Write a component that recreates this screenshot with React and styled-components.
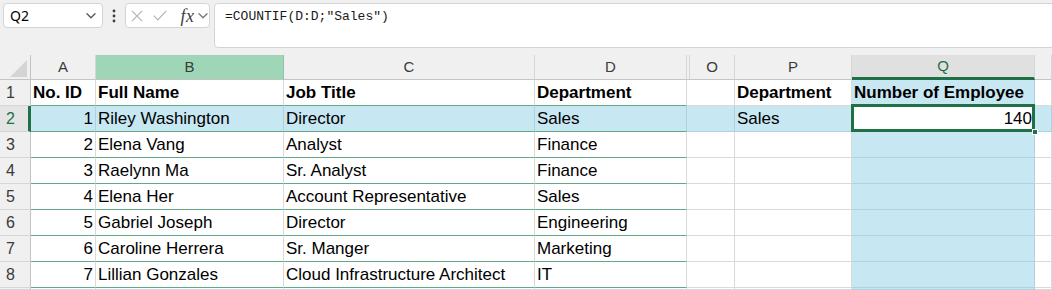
import React from 'react';
import styled, { createGlobalStyle, css } from 'styled-components';

const C = {
  bg: '#f0f0f0',
  grid: '#dadada',
  headLine: '#c4c4c4',
  headSep: '#d6d6d6',
  table: '#63a886',
  blue: '#c7e7f3',
  blueLine: '#aed2e0',
  green: '#1f7045',
  hover: '#a0d6b8',
  activeHead: '#e0e0e0',
};

const GlobalStyle = createGlobalStyle`
  html, body { margin: 0; padding: 0; background: ${C.bg}; overflow: hidden; }
  * { box-sizing: border-box; }
`;

const Frame = styled.div`
  width: 1052px;
  height: 290px;
  overflow: hidden;
  display: flex;
  flex-direction: column;
  background: ${C.bg};
  font-family: "Liberation Sans", Arial, sans-serif;
`;

const Toolbar = styled.div`
  height: 55px;
  flex: none;
  display: flex;
  align-items: flex-start;
  padding: 3px 0 0 3px;
`;

const NameBox = styled.div`
  width: 100px;
  height: 25px;
  flex: none;
  background: #fff;
  border: 1px solid #d4d4d4;
  border-radius: 4px;
  display: flex;
  align-items: center;
  justify-content: space-between;
  padding: 0 6px 0 6px;
  font-family: "Noto Sans", "Liberation Sans", sans-serif;
  font-size: 14px;
  color: #000;
`;

const Grip = styled.div`
  width: 22px;
  height: 25px;
  flex: none;
  display: flex;
  align-items: center;
  justify-content: center;
`;

const FnBox = styled.div`
  width: 85px;
  height: 25px;
  flex: none;
  background: #fff;
  border: 1px solid #d4d4d4;
  border-radius: 4px;
  display: flex;
  align-items: center;
  padding-left: 5px;
`;

const Slot = styled.span`
  display: flex;
  align-items: center;
  justify-content: center;
  width: ${p => p.$w}px;
  margin-right: ${p => p.$gap || 0}px;
  flex: none;
`;

const Fx = styled.span`
  font-family: "Liberation Serif", "DejaVu Serif", serif;
  font-style: italic;
  font-size: 18px;
  line-height: 20px;
  color: #3f3f3f;
  letter-spacing: 0.5px;
`;

const FormulaBox = styled.div`
  flex: 1;
  height: 45px;
  margin-left: 4px;
  margin-right: -8px;
  background: #fff;
  border: 1px solid #d4d4d4;
  border-radius: 4px;
  padding: 4px 10px 0 10px;
  font-family: "Liberation Mono", "DejaVu Sans Mono", monospace;
  font-size: 13px;
  line-height: 18px;
  color: #1a1a1a;
  white-space: pre;
`;

const Sheet = styled.div`
  flex: 1;
  display: grid;
  grid-template-columns: 31px 65px 188px 251px 152px 3px 45px 117px 183px 1fr;
  grid-template-rows: 25px repeat(8, 26px) 1fr;
  background: #fff;
  overflow: hidden;
`;

const Corner = styled.div`
  background: ${C.bg};
  border-right: 1px solid ${C.headLine};
  border-bottom: 1px solid ${C.headLine};
  display: flex;
  align-items: flex-end;
  justify-content: flex-end;
  padding: 0 3px 2px 0;
`;

const ColHead = styled.div`
  background: ${p => (p.$state === 'hover' ? C.hover : p.$state === 'active' ? C.activeHead : C.bg)};
  border-right: 1px solid ${p => (p.$state === 'hover' ? '#8fc3a5' : C.headSep)};
  border-bottom: ${p => (p.$state === 'active' ? `3px solid ${C.green}` : `1px solid ${C.headLine}`)};
  color: ${p => (p.$state === 'active' ? C.green : '#3a3a3a')};
  font-size: 15px;
  line-height: ${p => (p.$state === 'active' ? '22px' : '24px')};
  text-align: center;
`;

const RowHead = styled.div`
  background: ${p => (p.$active ? '#e4e4e4' : C.bg)};
  border-right: ${p => (p.$active ? `3px solid ${C.green}` : `1px solid ${C.headLine}`)};
  border-bottom: 1px solid ${C.headSep};
  color: ${p => (p.$active ? C.green : '#3a3a3a')};
  font-size: 16px;
  line-height: 25px;
  padding-left: 6px;
`;

const Cell = styled.div`
  position: relative;
  background: ${p => p.$bg};
  border-right: ${p => (p.$noV ? 'none' : `1px solid ${p.$vline}`)};
  border-bottom: 1px solid ${p => p.$hline};
  padding: 0 2px;
  font-size: 17px;
  line-height: 25px;
  font-weight: ${p => (p.$bold ? 700 : 400)};
  text-align: ${p => (p.$right ? 'right' : 'left')};
  white-space: nowrap;
  color: #000;
  ${p =>
    p.$active &&
    css`
      &::after {
        content: '';
        position: absolute;
        top: -2px;
        left: -1px;
        right: -1px;
        bottom: -1px;
        border: 3px solid ${C.green};
        z-index: 2;
        pointer-events: none;
      }
    `}
`;

const Handle = styled.span`
  position: absolute;
  right: -4px;
  bottom: -4px;
  width: 6px;
  height: 6px;
  background: ${C.green};
  border: 1px solid #fff;
  z-index: 3;
`;

const Chevron = ({ color = '#555' }) => (
  <svg width="10" height="6" viewBox="0 0 10 6">
    <polyline points="1,0.8 5,4.8 9,0.8" fill="none" stroke={color} strokeWidth="1.3" strokeLinecap="round" strokeLinejoin="round" />
  </svg>
);

const Dots = () => (
  <svg width="4" height="14" viewBox="0 0 4 14">
    <circle cx="2" cy="2" r="1.4" fill="#3c3c3c" />
    <circle cx="2" cy="7" r="1.4" fill="#3c3c3c" />
    <circle cx="2" cy="12" r="1.4" fill="#3c3c3c" />
  </svg>
);

const XIcon = () => (
  <svg width="12" height="12" viewBox="0 0 12 12">
    <path d="M0.8 0.8 L11.2 11.2 M11.2 0.8 L0.8 11.2" stroke="#b3b3b3" strokeWidth="1.2" fill="none" />
  </svg>
);

const CheckIcon = () => (
  <svg width="14" height="11" viewBox="0 0 14 11">
    <path d="M0.8 5.6 L4.8 9.8 L13.2 0.8" stroke="#b3b3b3" strokeWidth="1.2" fill="none" />
  </svg>
);

const CornerMark = () => (
  <svg width="17" height="17" viewBox="0 0 17 17">
    <polygon points="17,0 17,17 0,17" fill="#d4d4d4" />
  </svg>
);

const COLS = ['A', 'B', 'C', 'D', 'hid', 'O', 'P', 'Q', 'R'];
const TABLE = ['A', 'B', 'C', 'D'];

const people = [
  [1, 'Riley Washington', 'Director', 'Sales'],
  [2, 'Elena Vang', 'Analyst', 'Finance'],
  [3, 'Raelynn Ma', 'Sr. Analyst', 'Finance'],
  [4, 'Elena Her', 'Account Representative', 'Sales'],
  [5, 'Gabriel Joseph', 'Director', 'Engineering'],
  [6, 'Caroline Herrera', 'Sr. Manger', 'Marketing'],
  [7, 'Lillian Gonzales', 'Cloud Infrastructure Architect', 'IT'],
];

const rowValues = r => {
  const v = {};
  if (r === 1) {
    Object.assign(v, { A: 'No. ID', B: 'Full Name', C: 'Job Title', D: 'Department', P: 'Department', Q: 'Number of Employee' });
  } else if (r <= 8) {
    const p = people[r - 2];
    Object.assign(v, { A: p[0], B: p[1], C: p[2], D: p[3] });
  }
  if (r === 2) {
    v.P = 'Sales';
    v.Q = 140;
  }
  return v;
};

const cellProps = (r, col) => {
  const active = r === 2 && col === 'Q';
  const blue = !active && (r === 2 || col === 'Q');
  const inTable = TABLE.includes(col) && r <= 8;
  return {
    $bg: active ? '#fff' : blue ? C.blue : '#fff',
    $hline: inTable ? C.table : blue ? C.blueLine : C.grid,
    $vline: blue ? C.blueLine : C.grid,
    $noV: col === 'hid',
    $bold: r === 1,
    $right: (col === 'A' && r > 1) || (col === 'Q' && r > 1),
    $active: active,
  };
};

export default function App() {
  const rows = [1, 2, 3, 4, 5, 6, 7, 8, 9];
  return (
    <Frame>
      <GlobalStyle />
      <Toolbar>
        <NameBox>
          <span>Q2</span>
          <Chevron />
        </NameBox>
        <Grip>
          <Dots />
        </Grip>
        <FnBox>
          <Slot $w={12} $gap={10}><XIcon /></Slot>
          <Slot $w={14} $gap={13}><CheckIcon /></Slot>
          <Slot $w={15} $gap={3}><Fx>fx</Fx></Slot>
          <Slot $w={10}><Chevron color="#777" /></Slot>
        </FnBox>
        <FormulaBox>=COUNTIF(D:D;"Sales")</FormulaBox>
      </Toolbar>
      <Sheet>
        <Corner><CornerMark /></Corner>
        {COLS.map(col => (
          <ColHead
            key={col}
            $state={col === 'B' ? 'hover' : col === 'Q' ? 'active' : 'normal'}
          >
            {col === 'hid' || col === 'R' ? '' : col}
          </ColHead>
        ))}
        {rows.map(r => {
          const vals = rowValues(r);
          return (
            <React.Fragment key={r}>
              <RowHead $active={r === 2}>{r < 9 ? r : ''}</RowHead>
              {COLS.map(col => {
                const props = cellProps(r, col);
                return (
                  <Cell key={col} {...props}>
                    {vals[col] ?? ''}
                    {props.$active && <Handle />}
                  </Cell>
                );
              })}
            </React.Fragment>
          );
        })}
      </Sheet>
    </Frame>
  );
}
